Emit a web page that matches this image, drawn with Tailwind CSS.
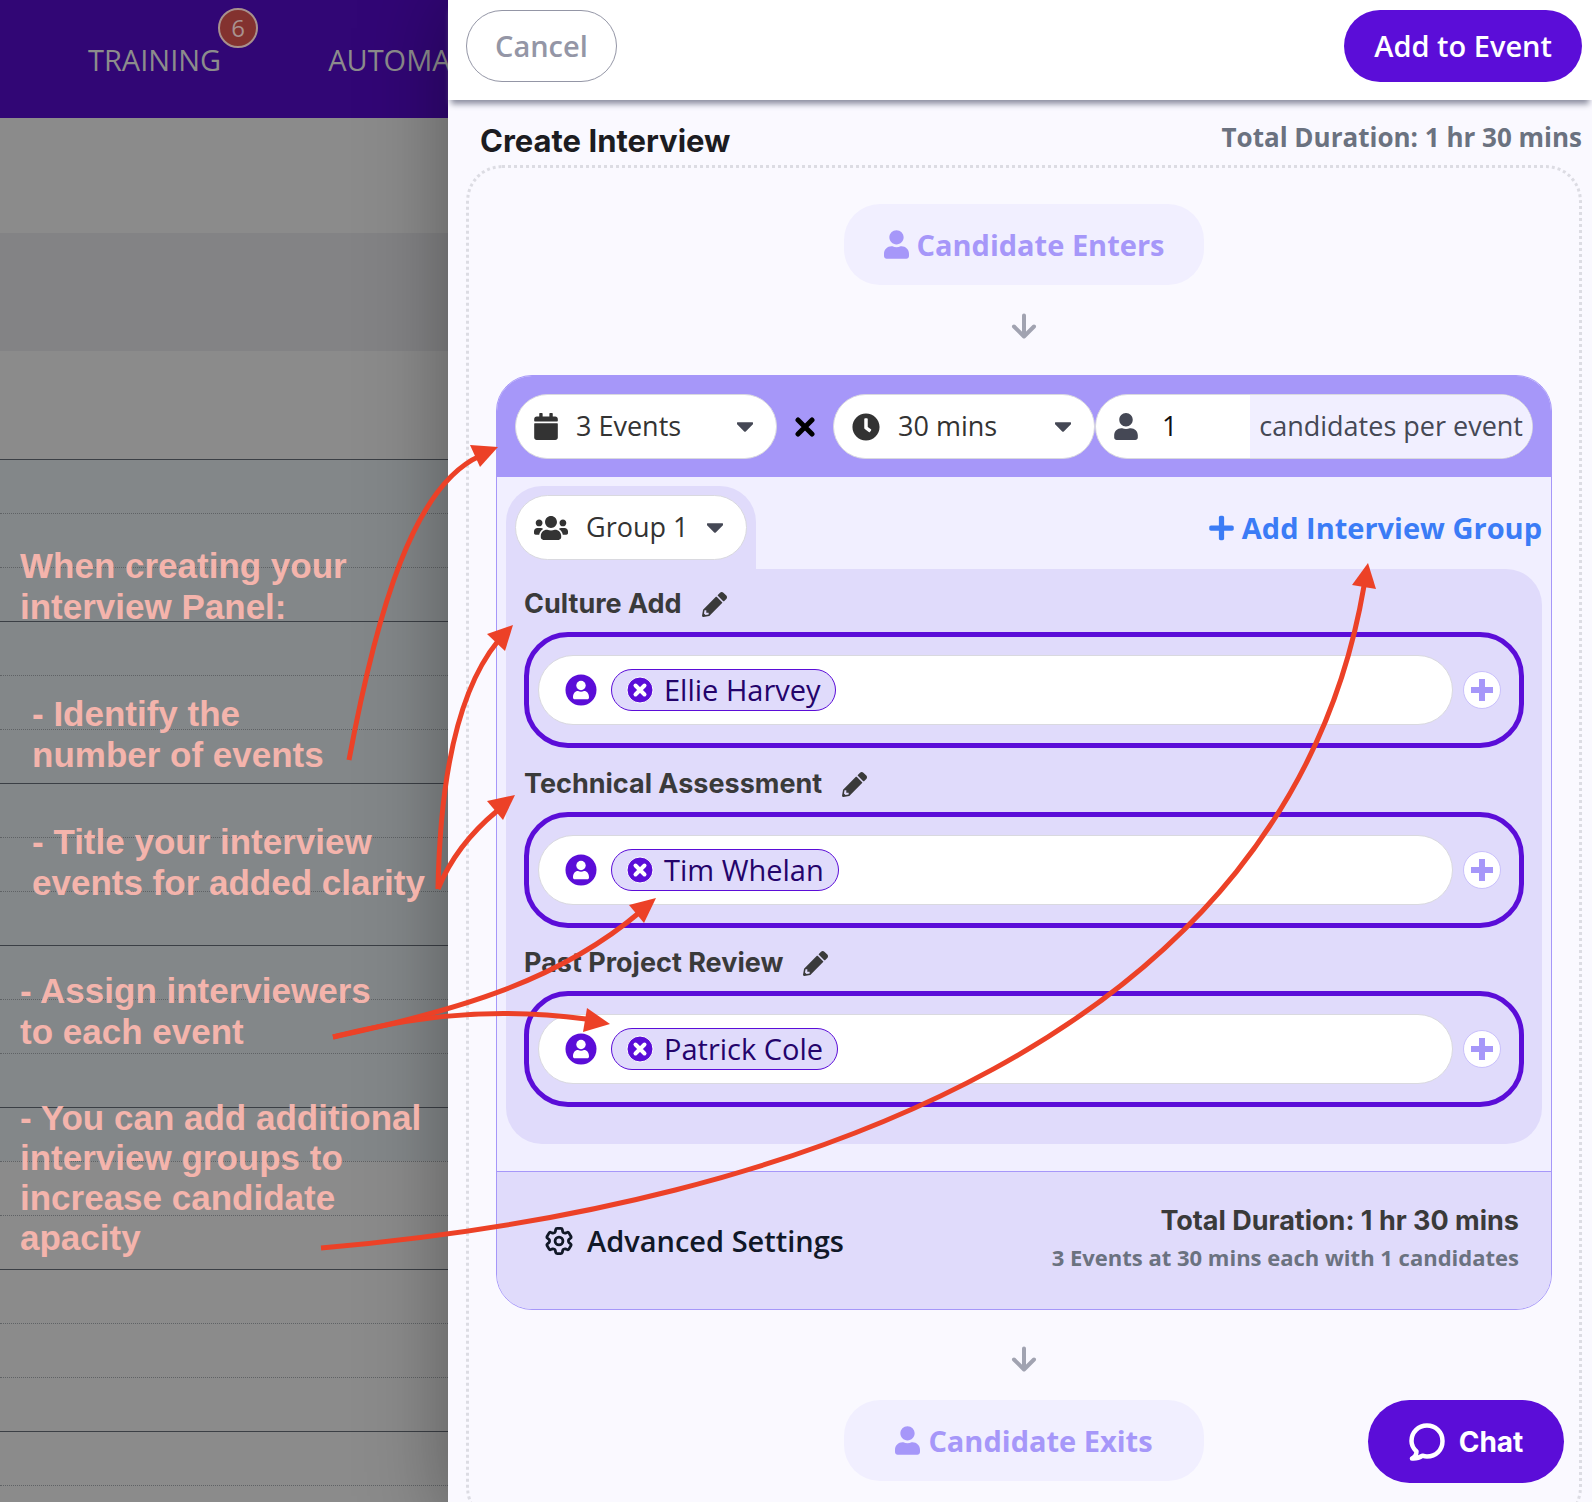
<!DOCTYPE html>
<html lang="en">
<head>
  <meta charset="UTF-8">
  <meta name="viewport" content="width=device-width, initial-scale=1.0">
  <title>Create Interview</title>
  <script src="https://cdn.jsdelivr.net/npm/@tailwindcss/browser@4"></script>
</head>
<body class="relative h-screen overflow-hidden bg-[#8b8b8b] font-['Open_Sans',sans-serif]">

  <!-- Icons -->
  <svg class="hidden">
    <symbol id="user" viewBox="0 0 448 512"><path fill="currentColor" d="M224 256c70.7 0 128-57.3 128-128S294.7 0 224 0 96 57.3 96 128s57.3 128 128 128zm89.6 32h-16.7c-22.2 10.2-46.9 16-72.9 16s-50.6-5.8-72.9-16h-16.7C60.2 288 0 348.2 0 422.4V464c0 26.5 21.5 48 48 48h352c26.5 0 48-21.5 48-48v-41.6c0-74.2-60.2-134.4-134.4-134.4z"/></symbol>
    <symbol id="calendar" viewBox="0 0 448 512"><path fill="currentColor" d="M12 192h424c6.600 0 12 5.400 12 12v260c0 26.500-21.500 48-48 48H48c-26.500 0-48-21.500-48-48V204c0-6.600 5.400-12 12-12zm436-44v-36c0-26.500-21.500-48-48-48h-48V12c0-6.600-5.400-12-12-12h-40c-6.600 0-12 5.400-12 12v52H160V12c0-6.600-5.400-12-12-12h-40c-6.600 0-12 5.400-12 12v52H48C21.500 64 0 85.500 0 112v36c0 6.600 5.400 12 12 12h424c6.600 0 12-5.400 12-12z"/></symbol>
    <symbol id="clock" viewBox="0 0 512 512"><path fill="currentColor" d="M256,8C119,8,8,119,8,256S119,504,256,504,504,393,504,256,393,8,256,8Zm92.49,313h0l-20,25a16,16,0,0,1-22.490,2.500h0l-67-49.720a40,40,0,0,1-15-31.230V112a16,16,0,0,1,16-16h32a16,16,0,0,1,16,16V256l58,42.500A16,16,0,0,1,348.490,321Z"/></symbol>
    <symbol id="caret" viewBox="16 190 288 172"><path fill="currentColor" d="M31.300 192h257.300c17.800 0 26.700 21.500 14.100 34.100L174.100 354.800c-7.800 7.800-20.500 7.800-28.300 0L17.200 226.100C4.600 213.500 13.500 192 31.300 192z"/></symbol>
    <symbol id="users" viewBox="0 0 640 512"><path fill="currentColor" d="M96 224c35.300 0 64-28.700 64-64s-28.700-64-64-64-64 28.700-64 64 28.700 64 64 64zm448 0c35.300 0 64-28.700 64-64s-28.700-64-64-64-64 28.700-64 64 28.700 64 64 64zm32 32h-64c-17.600 0-33.500 7.100-45.100 18.600 40.300 22.100 68.900 62 75.100 109.400h66c17.700 0 32-14.300 32-32v-32c0-35.300-28.700-64-64-64zm-256 0c61.900 0 112-50.100 112-112S381.900 32 320 32 208 82.100 208 144s50.100 112 112 112zm76.800 32h-8.300c-20.800 10-43.900 16-68.500 16s-47.600-6-68.500-16h-8.300C179.600 288 128 339.600 128 403.200V432c0 26.500 21.500 48 48 48h288c26.500 0 48-21.500 48-48v-28.800c0-63.600-51.600-115.200-115.200-115.200zm-223.700-13.400C161.500 263.100 145.600 256 128 256H64c-35.300 0-64 28.700-64 64v32c0 17.700 14.300 32 32 32h65.900c6.300-47.400 34.900-87.300 75.200-109.400z"/></symbol>
    <symbol id="plus" viewBox="0 0 448 512"><path fill="currentColor" d="M416 208H272V64c0-17.670-14.330-32-32-32h-32c-17.670 0-32 14.330-32 32v144H32c-17.670 0-32 14.330-32 32v32c0 17.670 14.330 32 32 32h144v144c0 17.670 14.330 32 32 32h32c17.670 0 32-14.330 32-32V304h144c17.670 0 32-14.330 32-32v-32c0-17.670-14.330-32-32-32z"/></symbol>
    <symbol id="pencil" viewBox="0 0 512 512"><path fill="currentColor" d="M497.900 142.100l-46.100 46.100c-4.700 4.700-12.300 4.700-17 0l-111-111c-4.700-4.700-4.700-12.300 0-17l46.100-46.100c18.700-18.700 49.100-18.700 67.900 0l60.100 60.100c18.800 18.700 18.800 49.100 0 67.900zM284.200 99.800L21.600 362.400.4 483.900c-2.900 16.400 11.400 30.600 27.800 27.800l121.500-21.300 262.600-262.600c4.700-4.700 4.700-12.300 0-17l-111-111c-4.800-4.700-12.400-4.700-17.100 0zM88 424h48v36.300l-64.500 11.300-31.100-31.100L51.700 376H88v48z"/></symbol>
    <symbol id="arrow-down" viewBox="0 0 26 26"><path fill="none" stroke="currentColor" stroke-width="4" stroke-linecap="round" stroke-linejoin="round" d="M13 2.500V23M3 13.500l10 10 10-10"/></symbol>
    <symbol id="person" viewBox="0 0 32 32"><circle cx="16" cy="16" r="15.500" fill="#5b0dd8"/><circle cx="16" cy="11.500" r="4.700" fill="#fff"/><path fill="#fff" d="M8 23.500c0-4 2-6.500 5-6.500 2 1 4 1 6 0 3 0 5 2.500 5 6.500 0 1-.7 1.800-1.800 1.800H9.800C8.700 25.300 8 24.500 8 23.500z"/></symbol>
    <symbol id="remove" viewBox="0 0 28 28"><circle cx="14" cy="14" r="13" fill="#5b0dd8" stroke="#fff"/><path stroke="#fff" stroke-width="4" stroke-linecap="round" d="M9.500 9.500l9 9M18.500 9.500l-9 9"/></symbol>
    <symbol id="gear" viewBox="2 2 20 20"><g fill="none" stroke="currentColor" stroke-width="2" stroke-linejoin="round"><path d="M9.594 3.940c.09-.542.56-.94 1.110-.94h2.593c.55 0 1.020.398 1.110.94l.213 1.281c.063.374.313.686.645.87.074.04.147.083.22.127.325.196.72.257 1.075.124l1.217-.456a1.125 1.125 0 0 1 1.370.49l1.296 2.247a1.125 1.125 0 0 1-.26 1.431l-1.003.827c-.293.241-.438.613-.43.992a7.723 7.723 0 0 1 0 .255c-.008.378.137.75.43.991l1.004.827c.424.35.534.955.26 1.430l-1.298 2.247a1.125 1.125 0 0 1-1.369.491l-1.217-.456c-.355-.133-.75-.072-1.076.124a6.470 6.470 0 0 1-.22.128c-.331.183-.581.495-.644.869l-.213 1.281c-.09.543-.56.94-1.110.94h-2.594c-.55 0-1.019-.398-1.110-.94l-.213-1.281c-.062-.374-.312-.686-.644-.87a6.520 6.520 0 0 1-.22-.127c-.325-.196-.72-.257-1.076-.124l-1.217.456a1.125 1.125 0 0 1-1.369-.49l-1.297-2.247a1.125 1.125 0 0 1 .26-1.431l1.004-.827c.292-.24.437-.613.43-.991a6.932 6.932 0 0 1 0-.255c.007-.38-.138-.751-.43-.992l-1.004-.827a1.125 1.125 0 0 1-.26-1.430l1.297-2.247a1.125 1.125 0 0 1 1.370-.491l1.216.456c.356.133.751.072 1.076-.124.072-.044.146-.086.22-.128.332-.183.582-.495.644-.869l.214-1.280Z"/><circle cx="12" cy="12" r="2.800"/></g></symbol>
    <symbol id="chat" viewBox="0 0 36 38"><path fill="none" stroke="currentColor" stroke-width="4.500" stroke-linejoin="round" stroke-linecap="round" d="M3 35.500c3-1.500 4.500-4 4.500-7C4.300 25.500 2.500 22 2.500 18 2.500 9 9.500 2.500 18 2.500S33.500 9 33.500 18 27 33.500 18 33.500c-1.500 0-3-.3-4.500-.8C10.500 34.800 7 35.800 3 35.500z"/></symbol>
  </svg>

  <div class="grid h-full grid-cols-[448px_1fr]">

    <!-- Dimmed schedule page -->
    <main class="min-w-0 overflow-hidden">
      <nav class="flex h-[118px] items-center bg-[#310675] pt-[2px] pl-[88px] text-[29px] text-[#8c8c8c]">
        <a href="#" class="relative mr-[107px] leading-10">TRAINING
          <span class="absolute -top-8 left-[130px] flex size-10 items-center justify-center rounded-full border-2 border-[#a8908c] bg-[#83322f] text-2xl text-[#a9918f]">6</span>
        </a>
        <a href="#" class="leading-10">AUTOMATION</a>
      </nav>
      <div class="h-[115px]"></div>
      <div class="h-[118px] bg-[#838385]"></div>
      <div class="h-[108px]"></div>
      <div id="slots"></div>
    </main>

    <!-- Drawer -->
    <aside class="relative z-10 flex min-w-0 flex-col bg-[#faf9ff] shadow-[0_0_80px_rgba(0,0,0,0.35)]">
      <header class="flex items-start justify-between bg-white pt-[10px] pr-[10px] pb-[18px] pl-[18px] text-[29px] font-semibold shadow-[0_7px_6px_-3px_#8b8d9f]">
        <button class="h-[72px] rounded-full border border-[#9496a6] px-7 text-[#9496a6]">Cancel</button>
        <button class="h-[72px] rounded-full bg-[#5b0dd8] px-[30px] text-white">Add to Event</button>
      </header>

      <div class="flex min-h-0 flex-1 flex-col overflow-hidden pr-[10px] pl-[18px]">
        <div class="flex h-[65px] shrink-0 items-center justify-between pt-4 pl-[14px]">
          <h1 class="font-['Inter',sans-serif] text-[31px] leading-10 font-bold text-[#1c1c21]">Create Interview</h1>
          <p class="mb-2 text-[26px] leading-8 font-bold text-[#6b7280]">Total Duration: 1 hr 30 mins</p>
        </div>

        <section class="flex shrink-0 flex-col items-center rounded-[36px] border-3 border-dotted border-[#dcdce3] px-[27px] pt-9 pb-10">
          <div class="flex h-[81px] w-[360px] items-center justify-center gap-2 rounded-[36px] bg-[#f1efff] text-[29px] font-bold text-[#a697f9]">
            <svg class="h-[29px] w-[25px]"><use href="#user"/></svg>Candidate Enters
          </div>
          <svg class="my-7 size-[26px] shrink-0 text-[#a1a3b1]"><use href="#arrow-down"/></svg>

          <div class="mt-2 w-full overflow-hidden rounded-[36px] border border-[#a697f9] bg-[#f1efff]">
            <div class="flex items-center bg-[#a697f9] p-[18px] text-[27px] text-[#333]">
              <label class="flex h-[65px] w-[262px] items-center rounded-full border border-[#d9d9df] bg-white px-[18px]">
                <svg class="h-[27px] w-6 shrink-0"><use href="#calendar"/></svg>
                <select class="ml-[18px] min-w-0 flex-1 appearance-none" aria-label="Number of events"><option>3 Events</option></select>
                <svg class="mx-[5px] h-[10px] w-4 shrink-0 text-[#454855]"><use href="#caret"/></svg>
              </label>
              <svg class="mx-[18px] size-5 shrink-0 text-black" viewBox="0 0 20 20"><path stroke="currentColor" stroke-width="5" stroke-linecap="round" d="M3 3l14 14M17 3L3 17"/></svg>
              <label class="flex h-[65px] w-[262px] items-center rounded-full border border-[#d9d9df] bg-white px-[18px]">
                <svg class="size-7 shrink-0"><use href="#clock"/></svg>
                <select class="ml-[18px] min-w-0 flex-1 appearance-none" aria-label="Event length"><option>30 mins</option></select>
                <svg class="mx-[5px] h-[10px] w-4 shrink-0 text-[#454855]"><use href="#caret"/></svg>
              </label>
              <label class="flex h-[65px] min-w-0 flex-1 items-center overflow-hidden rounded-full border border-[#d9d9df] bg-white pl-[18px] text-[#454855]">
                <svg class="h-[27px] w-6 shrink-0"><use href="#user"/></svg>
                <input type="text" value="1" aria-label="Candidates per event" class="ml-6 w-0 min-w-0 flex-1 text-[#111]">
                <span class="flex h-full items-center bg-[#f1efff] px-[9px] whitespace-nowrap">candidates per event</span>
              </label>
            </div>

            <div class="px-[9px] pt-[9px] pb-[27px]">
              <div class="flex items-center justify-between">
                <div class="rounded-t-[36px] bg-[#e0dbfb] p-[9px] text-[27px] text-[#333]">
                  <label class="flex h-[65px] items-center rounded-full border border-[#d9d9df] bg-white px-[18px]">
                    <svg class="h-7 w-[34px]"><use href="#users"/></svg>
                    <select class="mr-[18px] ml-[18px] appearance-none" aria-label="Group"><option>Group 1</option></select>
                    <svg class="mr-[5px] h-[10px] w-4 text-[#454855]"><use href="#caret"/></svg>
                  </label>
                </div>
                <button class="flex items-center gap-2 text-[29px] font-bold text-[#3b7cf6]">
                  <svg class="h-7 w-[25px]"><use href="#plus"/></svg>Add Interview Group
                </button>
              </div>

              <div class="rounded-[36px] rounded-tl-none bg-[#e0dbfb] px-[18px] pb-[37px]">
                <div class="flex h-[63px] items-center gap-5 pt-2">
                  <h2 class="font-['Inter',sans-serif] text-[27px] font-bold text-[#3a3a3a]">Culture Add</h2>
                  <button aria-label="Edit Culture Add"><svg class="size-[25px] text-[#3a3a3a]"><use href="#pencil"/></svg></button>
                </div>
                <div class="flex h-[116px] items-center gap-[10px] rounded-[44px] border-5 border-[#5b0dd8] pr-[18px] pl-[9px]">
                  <div class="flex h-[70px] flex-1 items-center gap-[14px] rounded-full border border-[#d9d9df] bg-white pl-[26px]">
                    <svg class="size-8"><use href="#person"/></svg>
                    <span class="flex h-[42px] items-center gap-[10px] rounded-full border border-[#5b0dd8] bg-[#e0dbfb] px-[14px] text-[29px] text-[#24036b]">
                      <button aria-label="Remove Ellie Harvey"><svg class="size-7"><use href="#remove"/></svg></button>Ellie Harvey
                    </span>
                  </div>
                  <button aria-label="Add interviewer" class="flex size-[38px] items-center justify-center rounded-full border border-[#c9c0fb] bg-white text-[#a697f9]"><svg class="size-[22px]" viewBox="0 0 22 22"><path stroke="currentColor" stroke-width="6" d="M11 0v22M0 11h22"/></svg></button>
                </div>

                <div class="flex h-[64px] items-center gap-5 pt-2">
                  <h2 class="font-['Inter',sans-serif] text-[27px] font-bold text-[#3a3a3a]">Technical Assessment</h2>
                  <button aria-label="Edit Technical Assessment"><svg class="size-[25px] text-[#3a3a3a]"><use href="#pencil"/></svg></button>
                </div>
                <div class="flex h-[116px] items-center gap-[10px] rounded-[44px] border-5 border-[#5b0dd8] pr-[18px] pl-[9px]">
                  <div class="flex h-[70px] flex-1 items-center gap-[14px] rounded-full border border-[#d9d9df] bg-white pl-[26px]">
                    <svg class="size-8"><use href="#person"/></svg>
                    <span class="flex h-[42px] items-center gap-[10px] rounded-full border border-[#5b0dd8] bg-[#e0dbfb] px-[14px] text-[29px] text-[#24036b]">
                      <button aria-label="Remove Tim Whelan"><svg class="size-7"><use href="#remove"/></svg></button>Tim Whelan
                    </span>
                  </div>
                  <button aria-label="Add interviewer" class="flex size-[38px] items-center justify-center rounded-full border border-[#c9c0fb] bg-white text-[#a697f9]"><svg class="size-[22px]" viewBox="0 0 22 22"><path stroke="currentColor" stroke-width="6" d="M11 0v22M0 11h22"/></svg></button>
                </div>

                <div class="flex h-[63px] items-center gap-5 pt-2">
                  <h2 class="font-['Inter',sans-serif] text-[27px] font-bold text-[#3a3a3a]">Past Project Review</h2>
                  <button aria-label="Edit Past Project Review"><svg class="size-[25px] text-[#3a3a3a]"><use href="#pencil"/></svg></button>
                </div>
                <div class="flex h-[116px] items-center gap-[10px] rounded-[44px] border-5 border-[#5b0dd8] pr-[18px] pl-[9px]">
                  <div class="flex h-[70px] flex-1 items-center gap-[14px] rounded-full border border-[#d9d9df] bg-white pl-[26px]">
                    <svg class="size-8"><use href="#person"/></svg>
                    <span class="flex h-[42px] items-center gap-[10px] rounded-full border border-[#5b0dd8] bg-[#e0dbfb] px-[14px] text-[29px] text-[#24036b]">
                      <button aria-label="Remove Patrick Cole"><svg class="size-7"><use href="#remove"/></svg></button>Patrick Cole
                    </span>
                  </div>
                  <button aria-label="Add interviewer" class="flex size-[38px] items-center justify-center rounded-full border border-[#c9c0fb] bg-white text-[#a697f9]"><svg class="size-[22px]" viewBox="0 0 22 22"><path stroke="currentColor" stroke-width="6" d="M11 0v22M0 11h22"/></svg></button>
                </div>
              </div>
            </div>

            <div class="flex h-[138px] items-center justify-between border-t border-[#a697f9] bg-[#e0dbfb] pr-8 pl-12">
              <button class="flex items-center gap-[14px] text-[29px] font-semibold text-[#111827]">
                <svg class="size-7"><use href="#gear"/></svg>Advanced Settings
              </button>
              <div class="pb-1 text-right font-bold">
                <p class="font-['Inter',sans-serif] text-[27px] leading-9 text-[#3a3a3a]">Total Duration: 1 hr 30 mins</p>
                <p class="text-[22px] leading-9 text-[#6b7280]">3 Events at 30 mins each with 1 candidates</p>
              </div>
            </div>
          </div>

          <svg class="mt-9 mb-7 size-[26px] shrink-0 text-[#a1a3b1]"><use href="#arrow-down"/></svg>
          <div class="flex h-[81px] w-[360px] items-center justify-center gap-2 rounded-[36px] bg-[#f1efff] text-[29px] font-bold text-[#a697f9]">
            <svg class="h-[29px] w-[25px]"><use href="#user"/></svg>Candidate Exits
          </div>
        </section>
      </div>
    </aside>
  </div>

  <button class="absolute right-7 bottom-[19px] z-20 flex h-[83px] w-[196px] items-center justify-center gap-[14px] rounded-full bg-[#5b0dd8] font-['Inter',sans-serif] text-[28px] font-bold text-white">
    <svg class="h-[38px] w-9 overflow-visible"><use href="#chat"/></svg>Chat
  </button>

  <!-- Notes -->
  <div class="absolute top-[545px] left-5 z-30 font-['Liberation_Sans',sans-serif] text-[35px] leading-[41px] font-bold whitespace-nowrap text-[#f4b4ac]">
    <p>When creating your<br>interview Panel:</p>
    <p class="mt-[66px] ml-3">- Identify the<br>number of events</p>
    <p class="mt-[46px] ml-3">- Title your interview<br>events for added clarity</p>
    <p class="mt-[67px]">- Assign interviewers<br>to each event</p>
    <p class="mt-[46px] leading-10">- You can add additional<br>interview groups to<br>increase candidate<br>apacity</p>
  </div>

  <!-- Arrows from the notes to the form -->
  <svg class="pointer-events-none absolute top-0 left-0 z-30" width="1592" height="1502">
    <g fill="none" stroke="#ec4127" stroke-width="5">
      <path d="M349 760C377 610 414 485 480 456"/>
      <path d="M438 889C440 780 458 690 498 641"/>
      <path d="M438 889Q456 845 497 811"/>
      <path d="M333 1037C460 1010 560 980 640 912"/>
      <path d="M333 1037C400 1020 480 1005 586 1019"/>
      <path d="M321 1248C800 1207 1288 1032 1364 586"/>
    </g>
    <g fill="#ec4127">
      <path d="M498 447L470 445L480 467z"/>
      <path d="M513 625L487 634L505 651z"/>
      <path d="M515 795L487 801L503 820z"/>
      <path d="M656 898L629 905L644 923z"/>
      <path d="M610 1024L587 1008L583 1032z"/>
      <path d="M1368 563L1352 585L1376 589z"/>
    </g>
  </svg>

  <script>
    const slots = document.getElementById('slots');

    // every third slot starts a new hour; the first 13 are bookable
    for (let i = 0; i < 20; i++) {
      const row = document.createElement('div');
      row.className = 'h-[54px] border-t';
      row.className += i % 3 === 0 ? ' border-[#3b3f45]' : ' border-dotted border-[#5f6265]';
      if (i < 13) row.className += ' bg-[#838789]';
      slots.appendChild(row);
    }
  </script>
</body>
</html>
